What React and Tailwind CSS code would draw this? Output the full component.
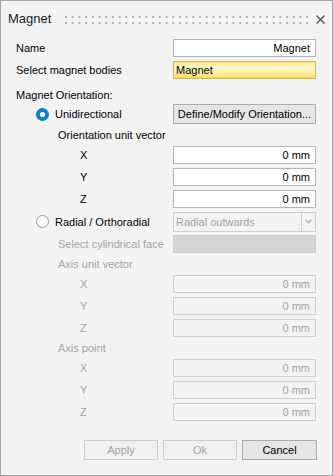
import React from 'react';

const font = { fontFamily: '"Liberation Sans", Arial, sans-serif' };

function Grip() {
  const dots = [];
  for (let i = 0; i < 37; i++) {
    dots.push(<rect key={`a${i}`} x={i * 6.7} y={0} width={2} height={2} fill="#b4b4b4" />);
    dots.push(<rect key={`b${i}`} x={i * 6.7} y={6} width={2} height={2} fill="#b4b4b4" />);
  }
  return (
    <svg width="244" height="8" viewBox="0 0 244 8">
      {dots}
    </svg>
  );
}

function Radio({ checked }) {
  return checked ? (
    <svg width="13" height="13" viewBox="0 0 13 13">
      <circle cx="6.5" cy="6.5" r="6.5" fill="#0a7fd8" />
      <circle cx="6.5" cy="6.5" r="2.6" fill="#fff" />
    </svg>
  ) : (
    <svg width="13" height="13" viewBox="0 0 13 13">
      <circle cx="6.5" cy="6.5" r="6" fill="#fff" stroke="#9a9a9a" strokeWidth="1" />
    </svg>
  );
}

function Field({ value, disabled }) {
  return (
    <div
      className={`ml-auto mr-[16px] flex h-[18px] w-[143px] items-center justify-end border pr-[5px] ${
        disabled ? 'border-[#cfcfcf] bg-[#f3f3f3] text-[#a3a3a3]' : 'border-[#b4b4b4] bg-white text-black'
      }`}
    >
      {value}
    </div>
  );
}

function AxisRow({ label, disabled }) {
  return (
    <div className="flex h-[22px] items-center">
      <span className={`ml-[79px] ${disabled ? 'text-[#a3a3a3]' : 'text-black'}`}>{label}</span>
      <Field value="0 mm" disabled={disabled} />
    </div>
  );
}

function Caption({ children, disabled, left = 57 }) {
  return (
    <div className="flex h-[18px] items-center">
      <span className={`${left === 57 ? 'ml-[57px]' : 'ml-[16px]'} ${disabled ? 'text-[#a3a3a3]' : 'text-black'}`}>
        {children}
      </span>
    </div>
  );
}

export default function App() {
  return (
    <div
      style={font}
      className="relative flex h-[476px] w-[333px] flex-col border border-[#a5a5a5] bg-[#f3f3f3] text-[11px] leading-[14px] text-black"
    >
      <div className="flex h-[36px] items-center">
        <span className="ml-[7px] text-[13px] text-[#1b1b1b]">Magnet</span>
        <div className="ml-[14px] mt-[2px]">
          <Grip />
        </div>
        <svg className="ml-[7px]" width="9" height="9" viewBox="0 0 9 9">
          <path d="M0.5 0.5 L8.5 8.5 M8.5 0.5 L0.5 8.5" stroke="#444" strokeWidth="1.1" />
        </svg>
      </div>

      <div className="flex h-[22px] items-center">
        <span className="ml-[15px]">Name</span>
        <Field value="Magnet" />
      </div>
      <div className="flex h-[22px] items-center">
        <span className="ml-[15px]">Select magnet bodies</span>
        <div className="ml-auto mr-[16px] flex h-[18px] w-[143px] items-center border border-[#c9b46a] bg-[linear-gradient(to_bottom,#ffe680_0%,#fff7cc_30%,#fff2b0_65%,#ffd84a_100%)] pl-[2px]">
          Magnet
        </div>
      </div>

      <div className="h-[21px] pt-[7px]">
        <span className="ml-[15px]">Magnet Orientation:</span>
      </div>

      <div className="flex h-[24px] items-center">
        <div className="ml-[35px] flex items-center gap-[6px]">
          <Radio checked />
          <span>Unidirectional</span>
        </div>
        <div className="ml-auto mr-[16px] flex h-[20px] w-[143px] items-center justify-center border border-[#adadad] bg-[#e5e5e5]">
          Define/Modify Orientation...
        </div>
      </div>

      <Caption>Orientation unit vector</Caption>
      <AxisRow label="X" />
      <AxisRow label="Y" />
      <AxisRow label="Z" />

      <div className="flex h-[23px] items-center">
        <div className="ml-[35px] flex items-center gap-[6px]">
          <Radio />
          <span>Radial / Orthoradial</span>
        </div>
        <div className="ml-auto mr-[16px] flex h-[20px] w-[143px] items-stretch border border-[#cfcfcf] bg-[#f3f3f3] text-[#a3a3a3]">
          <span className="flex flex-1 items-center pl-[2px]">Radial outwards</span>
          <div className="flex w-[14px] items-center justify-center border-l border-[#cfcfcf]">
            <svg width="7" height="5" viewBox="0 0 7 5">
              <path d="M0.5 0.8 L3.5 3.8 L6.5 0.8" stroke="#b0b0b0" strokeWidth="1.4" fill="none" />
            </svg>
          </div>
        </div>
      </div>

      <div className="flex h-[22px] items-center">
        <span className="ml-[57px] text-[#a3a3a3]">Select cylindrical face</span>
        <div className="ml-auto mr-[16px] h-[18px] w-[143px] border border-[#cccccc] bg-[#d5d5d5]" />
      </div>

      <Caption disabled>Axis unit vector</Caption>
      <AxisRow label="X" disabled />
      <AxisRow label="Y" disabled />
      <AxisRow label="Z" disabled />

      <Caption disabled>Axis point</Caption>
      <AxisRow label="X" disabled />
      <AxisRow label="Y" disabled />
      <AxisRow label="Z" disabled />

      <div className="mt-[17px] flex h-[20px] justify-end gap-[5px] pr-[15px]">
        <div className="flex w-[74px] items-center justify-center border border-[#cccccc] bg-[#f0f0f0] text-[#a3a3a3]">
          Apply
        </div>
        <div className="flex w-[74px] items-center justify-center border border-[#cccccc] bg-[#f0f0f0] text-[#a3a3a3]">
          Ok
        </div>
        <div className="flex w-[75px] items-center justify-center border border-[#adadad] bg-[#e5e5e5]">
          Cancel
        </div>
      </div>
    </div>
  );
}
